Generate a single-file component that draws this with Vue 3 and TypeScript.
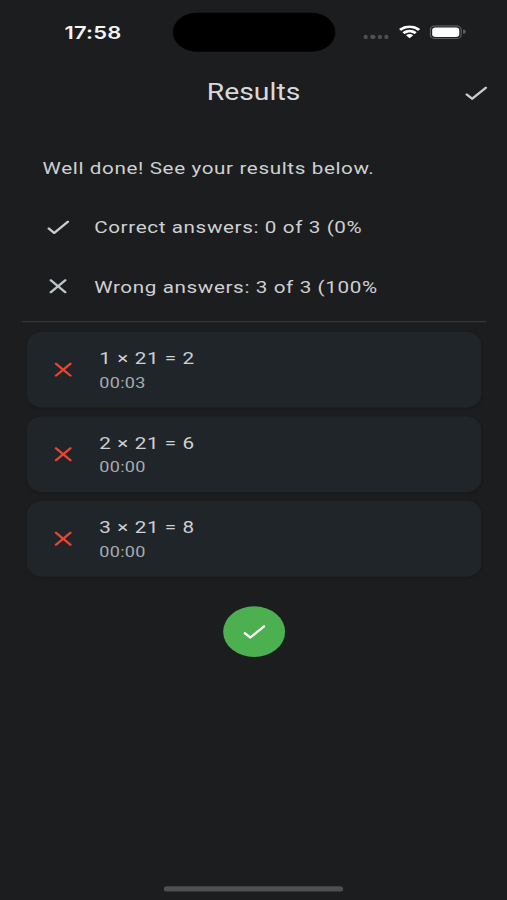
<script setup lang="ts">
interface Answer {
  question: string
  time: string
}

const checkPath =
  'M9 16.17L5.53 12.7c-.39-.39-1.02-.39-1.41 0s-.39 1.02 0 1.41l4.18 4.18c.39.39 1.02.39 1.41 0L20.29 7.71c.39-.39.39-1.02 0-1.41s-1.02-.39-1.41 0L9 16.17z'
const closePath =
  'M18.3 5.71c-.39-.39-1.02-.39-1.41 0L12 10.59 7.11 5.7c-.39-.39-1.02-.39-1.41 0s-.39 1.02 0 1.41L10.59 12 5.7 16.89c-.39.39-.39 1.02 0 1.41s1.02.39 1.41 0L12 13.41l4.89 4.89c.39.39 1.02.39 1.41 0s.39-1.02 0-1.41L13.41 12l4.89-4.89c.38-.38.38-1.02 0-1.4z'

const answers: Answer[] = [
  { question: '1 × 21 = 2', time: '00:03' },
  { question: '2 × 21 = 6', time: '00:00' },
  { question: '3 × 21 = 8', time: '00:00' },
]
</script>

<template>
  <div class="viewport">
    <div class="screen">
      <header class="status">
        <span class="clock">17:58</span>
        <span class="island"></span>
        <div class="indicators">
          <span class="dots"><i v-for="n in 4" :key="n"></i></span>
          <svg class="wifi" viewBox="0 0 17 12.4">
            <path d="M8.5 2.6c2.4 0 4.6.9 6.3 2.5.1.1.3.1.4 0l1.3-1.3c.1-.1.1-.3 0-.5C12-1 5-1 .5 3.3c-.1.2-.1.4 0 .5l1.3 1.3c.1.1.3.1.4 0C3.9 3.5 6.1 2.6 8.5 2.6z" />
            <path d="M8.5 6.7c1.3 0 2.6.5 3.6 1.4.1.1.3.1.5 0l1.2-1.3c.2-.1.2-.3 0-.5-3-2.8-7.6-2.8-10.6 0-.2.2-.2.4 0 .5l1.2 1.3c.2.1.4.1.5 0 1-.9 2.3-1.4 3.6-1.4z" />
            <path d="M11.1 9.6c.1-.1.1-.3 0-.4-1.5-1.3-3.7-1.3-5.2 0-.1.1-.1.3 0 .4l2.4 2.4c.1.1.3.1.4 0z" />
          </svg>
          <span class="battery"><span class="shell"><span class="charge"></span></span><span class="nub"></span></span>
        </div>
      </header>

      <div class="appbar">
        <h1>Results</h1>
        <svg class="icon" viewBox="0 0 24 24"><path :d="checkPath" /></svg>
      </div>

      <main>
        <section class="summary">
          <p class="row">Well done! See your results below.</p>
          <p class="row">
            <svg class="icon" viewBox="0 0 24 24"><path :d="checkPath" /></svg>
            <span>Correct answers: 0 of 3 (0%</span>
          </p>
          <p class="row">
            <svg class="icon cool" viewBox="0 0 24 24"><path :d="closePath" /></svg>
            <span>Wrong answers: 3 of 3 (100%</span>
          </p>
        </section>
        <div class="divider"></div>
        <ul class="answers">
          <li v-for="answer in answers" :key="answer.question" class="card">
            <svg class="icon wrong" viewBox="0 0 24 24"><path :d="closePath" /></svg>
            <div>
              <div class="question">{{ answer.question }}</div>
              <div class="time">{{ answer.time }}</div>
            </div>
          </li>
        </ul>
        <button class="done" aria-label="Done">
          <svg class="icon" viewBox="0 0 24 24"><path :d="checkPath" /></svg>
        </button>
      </main>
      <div class="home"></div>
    </div>
  </div>
</template>

<style>
body {
  margin: 0;
  background: #1b1d1e;
}
</style>

<style scoped>
.viewport {
  width: 507px;
  height: 900px;
  overflow: hidden;
}
/* The 393 x 852 phone canvas fills the whole viewport. */
.screen {
  width: 393px;
  height: 852px;
  display: flex;
  flex-direction: column;
  background: #1b1d1e;
  color: #cfd0d2;
  font-family: Roboto, sans-serif;
  transform: scale(1.290076, 1.056338);
  transform-origin: 0 0;
}
.status {
  height: 59px;
  flex: none;
  display: grid;
  grid-template-columns: 134px 126px 1fr;
  align-items: center;
  padding-top: 2px;
  box-sizing: border-box;
}
.clock {
  padding-left: 50px;
  font: 600 17px/22px Inter, sans-serif;
  letter-spacing: 0.15px;
  color: #f4f4f5;
}
.island {
  height: 37px;
  border-radius: 19px;
  background: #000;
}
.indicators {
  display: flex;
  align-items: center;
  padding-left: 22px;
}
.dots {
  display: flex;
  gap: 2.1px;
  padding-top: 9px;
  margin-right: 7.8px;
}
.dots i {
  width: 3.3px;
  height: 3.3px;
  border-radius: 50%;
  background: #505153;
}
.wifi {
  width: 17px;
  height: 12.4px;
  fill: #fff;
  margin: 0 7px 1px 0;
}
.battery {
  display: flex;
  align-items: center;
  gap: 1px;
  margin-bottom: 1px;
}
.shell {
  width: 25px;
  height: 13px;
  padding: 2px;
  box-sizing: border-box;
  border-radius: 4.2px;
  box-shadow: inset 0 0 0 1px #626365;
}
.charge {
  display: block;
  height: 9px;
  border-radius: 2.6px;
  background: #fff;
}
.nub {
  width: 1.4px;
  height: 4px;
  border-radius: 0 2px 2px 0;
  background: #626365;
}
.appbar {
  height: 56px;
  flex: none;
  display: grid;
  grid-template-columns: 48px 1fr 48px;
  align-items: center;
  justify-items: center;
  padding-top: 2px;
  box-sizing: border-box;
}
h1 {
  grid-column: 2;
  margin: 0;
  font-size: 22px;
  font-weight: 400;
  line-height: 28px;
  color: #d8d9da;
}
.icon {
  width: 24px;
  height: 24px;
  flex: none;
  display: block;
  fill: #cbcccd;
}
.cool {
  fill: #bcc5ca;
}
.wrong {
  fill: #e9442f;
}
main {
  flex: 1;
  display: flex;
  flex-direction: column;
  padding: 16px 16px 0 17px;
}
.summary {
  padding: 0 16px;
}
.row {
  height: 56px;
  margin: 0;
  display: flex;
  align-items: center;
  gap: 16px;
  font-size: 16px;
  letter-spacing: 0.48px;
  white-space: nowrap;
}
.divider {
  height: 1px;
  margin: 5px 0 8.7px;
  background: #3a3c3f;
}
.answers {
  list-style: none;
  margin: 0;
  padding: 0 4px;
  display: grid;
  gap: 8px;
}
.card {
  height: 72px;
  box-sizing: border-box;
  padding: 0 16px;
  display: flex;
  align-items: center;
  gap: 16px;
  border-radius: 12px;
  background: #20252a;
  box-shadow: 0 1px 2px rgba(0, 0, 0, 0.15);
}
.question {
  font-size: 16px;
  line-height: 24px;
  letter-spacing: 0.48px;
}
.time {
  font-size: 14px;
  line-height: 20px;
  letter-spacing: 0.22px;
  color: #a9acaf;
}
.done {
  width: 48px;
  height: 48px;
  margin: 28.3px auto 0;
  padding: 12px;
  border: 0;
  border-radius: 50%;
  background: #4caf50;
}
.done .icon {
  fill: #fff;
}
.home {
  width: 139px;
  height: 5px;
  flex: none;
  margin: 0 auto 8px;
  border-radius: 3px;
  background: #4e4f50;
}
</style>
